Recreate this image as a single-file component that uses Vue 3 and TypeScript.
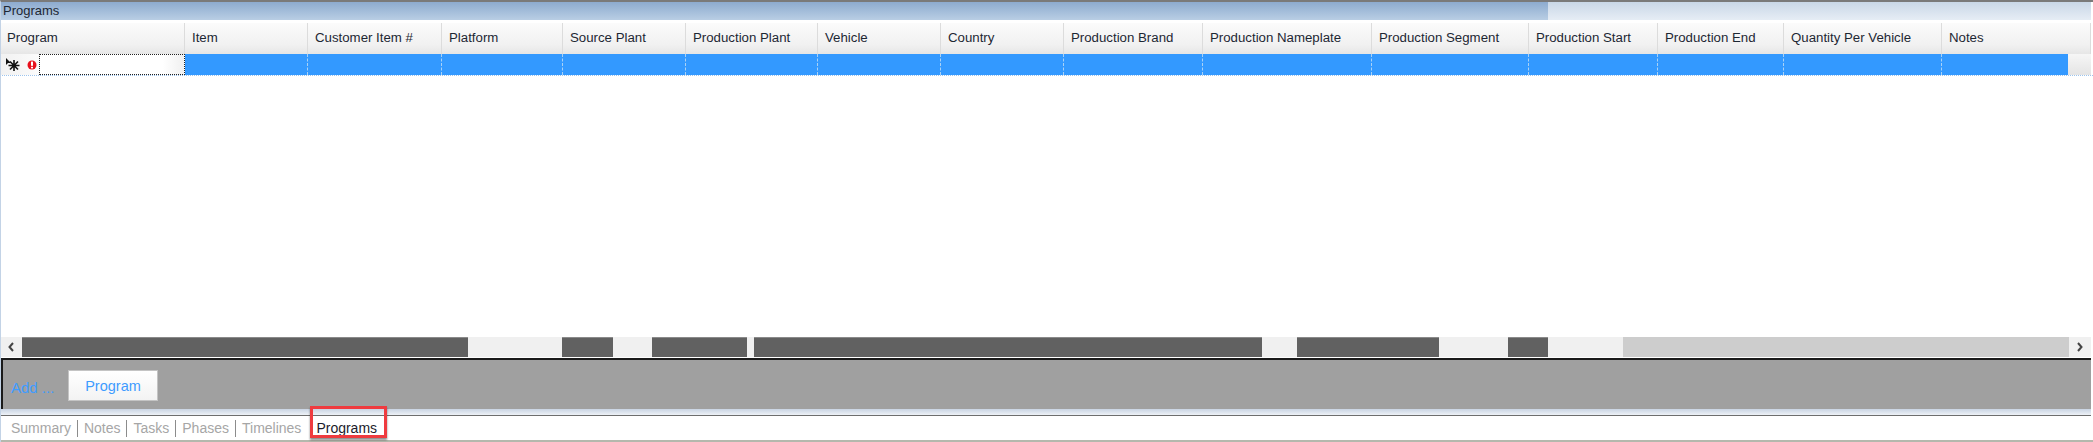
<script setup lang="ts">
// column right edges come from the grid, so keep widths here
const columns = [
  { name: 'Program', width: 185 },
  { name: 'Item', width: 123 },
  { name: 'Customer Item #', width: 134 },
  { name: 'Platform', width: 121 },
  { name: 'Source Plant', width: 123 },
  { name: 'Production Plant', width: 132 },
  { name: 'Vehicle', width: 123 },
  { name: 'Country', width: 123 },
  { name: 'Production Brand', width: 139 },
  { name: 'Production Nameplate', width: 169 },
  { name: 'Production Segment', width: 157 },
  { name: 'Production Start', width: 129 },
  { name: 'Production End', width: 126 },
  { name: 'Quantity Per Vehicle', width: 158 },
  { name: 'Notes', width: 149 },
]

const scrollParts = [
  { width: 446, dark: true },
  { width: 94, dark: false },
  { width: 51, dark: true },
  { width: 39, dark: false },
  { width: 95, dark: true },
  { width: 7, dark: false },
  { width: 508, dark: true },
  { width: 35, dark: false },
  { width: 142, dark: true },
  { width: 69, dark: false },
  { width: 40, dark: true },
  { width: 75, dark: false },
]

const tabs = ['Summary', 'Notes', 'Tasks', 'Phases', 'Timelines']
</script>

<template>
  <div class="page">
    <div class="title-bar">
      <div class="title-fill">Programs</div>
    </div>

    <div class="grid-head">
      <div
        v-for="col in columns"
        :key="col.name"
        class="head-cell"
        :style="{ width: col.width + 'px' }"
      >
        {{ col.name }}
      </div>
    </div>

    <div class="new-row">
      <div class="row-marker">
        <svg width="20" height="16" viewBox="0 0 20 16">
          <path d="M1 1 L1 8 L3 6 L6 6 Z" fill="#111" />
          <path
            d="M9 3 V14 M3.5 8.5 H14.5 M5 4.5 L13 12.5 M13 4.5 L5 12.5"
            stroke="#111"
            stroke-width="1.6"
          />
        </svg>
        <svg width="10" height="10" viewBox="0 0 10 10">
          <circle cx="5" cy="5" r="4.5" fill="#e8101c" />
          <rect x="4" y="1.6" width="2" height="4.2" fill="#fff" />
          <rect x="4" y="6.8" width="2" height="1.6" fill="#fff" />
        </svg>
      </div>
      <div class="edit-cell"></div>
      <div
        v-for="col in columns.slice(1)"
        :key="col.name"
        class="blue-cell"
        :style="{ width: col.width + 'px' }"
      ></div>
      <div class="end-button"></div>
    </div>

    <div class="grid-body"></div>

    <div class="h-scroll">
      <div class="arrow">
        <svg width="8" height="12" viewBox="0 0 8 12">
          <path d="M6 2 L2.5 6 L6 10" fill="none" stroke="#444" stroke-width="2" />
        </svg>
      </div>
      <div
        v-for="(part, i) in scrollParts"
        :key="i"
        :class="part.dark ? 'part-dark' : 'part-light'"
        :style="{ width: part.width + 'px' }"
      ></div>
      <div class="track"></div>
      <div class="arrow">
        <svg width="8" height="12" viewBox="0 0 8 12">
          <path d="M2 2 L5.5 6 L2 10" fill="none" stroke="#444" stroke-width="2" />
        </svg>
      </div>
    </div>

    <div class="add-panel">
      <span class="add-label">Add ...</span>
      <button class="add-button">Program</button>
    </div>

    <div class="panel-gap"></div>

    <div class="tab-strip">
      <span v-for="tab in tabs" :key="tab" class="tab">{{ tab }}</span>
      <span class="tab-active">
        Programs
        <span class="highlight"></span>
      </span>
    </div>
    <div class="bottom-line"></div>
  </div>
</template>

<style>
html,
body {
  margin: 0;
  background: #fff;
}
</style>

<style scoped>
.page {
  width: 2093px;
  height: 442px;
  box-sizing: border-box;
  overflow: hidden;
  display: flex;
  flex-direction: column;
  background: #fff;
  border-top: 2px solid #7a7a7a;
  border-left: 1px solid #c3d3e6;
  font-family: "Liberation Sans", Arial, sans-serif;
  font-size: 13px;
  color: #1d2733;
}

.title-bar {
  height: 18px;
  margin-right: 2px;
  flex-shrink: 0;
  background: linear-gradient(#c9d7e7, #e6edf5);
}

.title-fill {
  width: 1547px;
  height: 18px;
  padding-left: 2px;
  box-sizing: border-box;
  line-height: 18px;
  background: linear-gradient(#8dabcf, #b9cee4);
}

.grid-head {
  display: flex;
  height: 31px;
  margin-top: 3px;
  margin-left: -1px;
  flex-shrink: 0;
  font-size: 13.25px;
}

.head-cell {
  box-sizing: border-box;
  flex-shrink: 0;
  padding-left: 7px;
  line-height: 30px;
  white-space: nowrap;
  background: linear-gradient(#fbfbfb, #f1f1f1 70%, #e6e6e6);
  border-right: 1px solid #dcdcdc;
}

.new-row {
  display: flex;
  position: relative;
  height: 22px;
  margin-left: -1px;
  flex-shrink: 0;
  border-bottom: 1px dotted #9cc4ee;
  box-sizing: border-box;
}

.row-marker {
  width: 39px;
  flex-shrink: 0;
  display: flex;
  align-items: center;
  gap: 2px;
  padding-left: 5px;
  box-sizing: border-box;
  background: linear-gradient(90deg, #f1f1f1, #fbfbfb);
}

.edit-cell {
  width: 146px;
  flex-shrink: 0;
  box-sizing: border-box;
  background: linear-gradient(90deg, #fff 85%, #f0f0f0);
  border: 1px dotted #222;
}

.blue-cell {
  box-sizing: border-box;
  flex-shrink: 0;
  background: #3399ff;
  border-right: 1px dashed #a9d1f5;
}

.end-button {
  position: absolute;
  right: 2px;
  top: 0;
  width: 23px;
  height: 21px;
  background: linear-gradient(#f6f6f6, #e4e4e4);
}

.grid-body {
  flex: 1;
}

.h-scroll {
  display: flex;
  height: 20px;
  flex-shrink: 0;
  margin-left: -1px;
  margin-right: 2px;
  background: #f0f0f0;
}

.arrow {
  width: 22px;
  flex-shrink: 0;
  display: flex;
  align-items: center;
  justify-content: center;
}

.part-dark {
  flex-shrink: 0;
  background: #616161;
  border-top: 1px solid #8a8a8a;
  box-sizing: border-box;
}

.part-light {
  flex-shrink: 0;
  background: #f0f0f0;
}

.track {
  flex: 1;
  background: #cdcdcd;
}

.add-panel {
  display: flex;
  align-items: flex-start;
  height: 51px;
  flex-shrink: 0;
  margin: 1px 2px 0 0;
  box-sizing: border-box;
  background: #a0a0a0;
  border-top: 2px solid #1a1a1a;
  border-left: 2px solid #1a1a1a;
  padding-top: 10px;
  padding-left: 8px;
}

.add-label {
  width: 57px;
  color: #3f9cff;
  font-size: 15px;
  padding-top: 9px;
}

.add-button {
  width: 90px;
  height: 31px;
  padding: 0;
  border: 1px solid #c4c4c4;
  background: linear-gradient(#fff, #f3f3f3);
  color: #3f9cff;
  font-family: inherit;
  font-size: 14.5px;
}

.panel-gap {
  height: 6px;
  flex-shrink: 0;
  margin: 0 2px 0 0;
  background: linear-gradient(#c9d4e3, #eef2f7);
  border-bottom: 1px solid #6e6e6e;
}

.tab-strip {
  display: flex;
  align-items: center;
  height: 24px;
  flex-shrink: 0;
  padding-left: 10px;
  font-size: 14px;
}

.tab {
  padding-right: 6px;
  margin-right: 6px;
  border-right: 1px solid #8c8c8c;
  color: #a6a6a6;
  line-height: 17px;
}

.tab:nth-child(5) {
  border-right: none;
  margin-right: 0;
}

.tab-active {
  position: relative;
  margin-left: 9px;
  color: #1b1b2b;
}

.highlight {
  position: absolute;
  left: -6px;
  right: -10px;
  top: -14px;
  height: 32px;
  box-sizing: border-box;
  border: 3px solid #ef3b3f;
  box-shadow: 0 2px 2px rgba(0, 0, 0, 0.45);
}

.bottom-line {
  height: 2px;
  flex-shrink: 0;
  background: #b4b8ad;
}
</style>
